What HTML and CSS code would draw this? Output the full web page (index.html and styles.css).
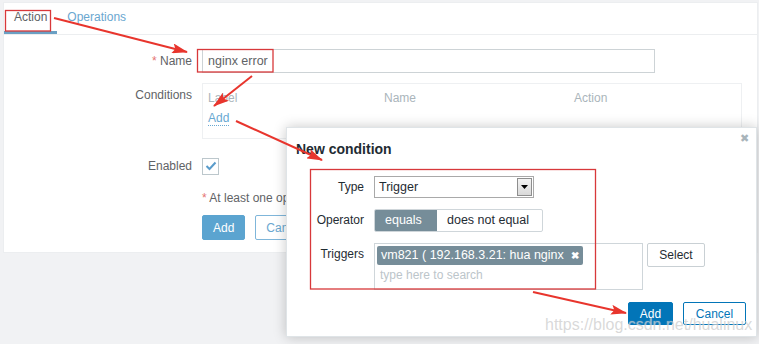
FILE: index.html
```html
<!DOCTYPE html>
<html lang="en">
<head>
  <meta charset="UTF-8">
  <meta name="viewport" content="width=device-width, initial-scale=1.0">
  <title>Action - New condition</title>
  <link rel="stylesheet" href="styles.css">
</head>
<body>
  <div class="page">
    <div class="panel">
      <div class="tabs">
        <div class="tab active">Action</div>
        <div class="tab">Operations</div>
      </div>
      <div class="form">
        <div class="label"><span class="req">*</span> Name</div>
        <div class="field"><div class="input">nginx error</div></div>

        <div class="label">Conditions</div>
        <div class="field">
          <div class="cond-box">
            <div class="cond-head">
              <span class="col-label">Label</span>
              <span class="col-name">Name</span>
              <span class="col-action">Action</span>
            </div>
            <div class="cond-add"><a class="dotted">Add</a></div>
          </div>
        </div>

        <div class="label enabled-label">Enabled</div>
        <div class="field enabled-field">
          <div class="checkbox">
            <svg width="12" height="10" viewBox="0 0 12 10"><path d="M1.5 5 L4.5 8 L10.5 1.5" fill="none" stroke="#5a9ccb" stroke-width="2"/></svg>
          </div>
        </div>

        <div class="label"></div>
        <div class="field note"><span class="req">*</span> At least one operation must exist.</div>

        <div class="label"></div>
        <div class="field buttons">
          <button class="btn primary">Add</button>
          <button class="btn outline">Cancel</button>
        </div>
      </div>
    </div>

    <div class="modal">
      <div class="modal-head">
        <div class="modal-title">New condition</div>
        <div class="modal-close">&#10006;</div>
      </div>
      <div class="modal-body">
        <div class="m-label">Type</div>
        <div class="m-field">
          <div class="select">
            <span>Trigger</span>
            <span class="select-btn">
              <svg width="7" height="4" viewBox="0 0 7 4"><path d="M0 0 H7 L3.5 4 Z" fill="#000"/></svg>
            </span>
          </div>
        </div>

        <div class="m-label">Operator</div>
        <div class="m-field">
          <div class="segment">
            <span class="seg on">equals</span>
            <span class="seg">does not equal</span>
          </div>
        </div>

        <div class="m-label">Triggers</div>
        <div class="m-field triggers">
          <div class="multi">
            <span class="chip">vm821 ( 192.168.3.21: hua nginx <b class="chip-x">&#10006;</b></span>
            <span class="placeholder">type here to search</span>
          </div>
          <button class="btn plain">Select</button>
        </div>
      </div>
      <div class="modal-foot">
        <button class="btn blue">Add</button>
        <button class="btn blue-outline">Cancel</button>
      </div>
    </div>

    <div class="watermark">https://blog.csdn.net/hualinux</div>

    <svg class="marks" width="759" height="344" viewBox="0 0 759 344">
      <defs>
        <marker id="head" viewBox="0 0 16 10" refX="15" refY="5" markerWidth="16" markerHeight="10" markerUnits="userSpaceOnUse" orient="auto">
          <path d="M0 0 L16 5 L0 10 L3 5 Z" fill="#e8352d"/>
        </marker>
      </defs>
      <rect x="5.5" y="10.5" width="45" height="20.5" fill="none" stroke="#d8383a" stroke-width="1.3"/>
      <rect x="197.5" y="49.5" width="75.5" height="22.5" fill="none" stroke="#d8383a" stroke-width="1.3"/>
      <rect x="310.5" y="169.5" width="285" height="119.5" fill="none" stroke="#d8383a" stroke-width="1.3"/>
      <g stroke="#e8352d" stroke-width="2" fill="none" marker-end="url(#head)">
        <line x1="54" y1="18" x2="187" y2="52"/>
        <line x1="252" y1="76" x2="214" y2="106"/>
        <line x1="236" y1="121" x2="322" y2="160"/>
        <line x1="533" y1="292" x2="626" y2="313"/>
      </g>
    </svg>
  </div>
</body>
</html>
```

FILE: styles.css
```css
body {
  margin: 0;
  background-color: #f1f2f4;
  font-family: "Liberation Sans", Arial, sans-serif;
  font-size: 12px;
}
.page {
  position: relative;
  width: 759px;
  height: 344px;
  overflow: hidden;
}
.panel {
  margin: 2px 1px 0 3px;
  height: 249px;
  background-color: #fff;
  border: 1px solid #eceef0;
}
.tabs {
  display: flex;
  border-bottom: 1px solid #eceef0;
}
.tab {
  padding: 0 10px 0 10px;
  line-height: 28px;
  border-bottom: 3px solid transparent;
  color: #6aa7d0;
}
.tab.active {
  color: #5f6366;
  border-bottom-color: #6aa0c4;
}
.form {
  display: grid;
  grid-template-columns: 188px 1fr;
  column-gap: 10px;
  row-gap: 10px;
  padding-top: 14px;
}
.label {
  text-align: right;
  line-height: 24px;
  color: #5f6366;
}
.req {
  color: #e57373;
}
.field {
  color: #5f6366;
}
.input {
  width: 446px;
  height: 22px;
  line-height: 22px;
  padding-left: 5px;
  border: 1px solid #cdd3d6;
  color: #5f6366;
  font-size: 12.5px;
}
.cond-box {
  width: 528px;
  height: 44px;
  padding: 5px;
  border: 1px solid #eef0f2;
  margin-bottom: 5px;
}
.cond-head {
  display: flex;
  line-height: 18px;
  color: #aab5bb;
}
.col-label { width: 176px; }
.col-name { width: 190px; }
.cond-add {
  margin-top: 3px;
  line-height: 16px;
}
.dotted {
  color: #68a8d2;
  border-bottom: 1px dotted #68a8d2;
}
.enabled-field {
  display: flex;
  align-items: center;
}
.checkbox {
  width: 15px;
  height: 15px;
  border: 1px solid #bcc7cc;
  display: flex;
  align-items: center;
  justify-content: center;
}
.note {
  line-height: 20px;
}
.buttons {
  display: flex;
  gap: 10px;
  margin-top: -3px;
}
.btn {
  font-family: "Liberation Sans", Arial, sans-serif;
  font-size: 12px;
  border-radius: 2px;
  cursor: pointer;
  background: #fff;
}
.primary {
  height: 25px;
  padding: 0 10px;
  background-color: #5ba4d0;
  border: 1px solid #5ba4d0;
  color: #fff;
}
.outline {
  height: 25px;
  padding: 0 10px;
  border: 1px solid #7fb6da;
  color: #6aa7d0;
}

/* modal dialog */
.modal {
  position: absolute;
  left: 286px;
  top: 127px;
  width: 469px;
  height: 208px;
  background-color: #fff;
  border: 1px solid #dfe4e7;
  box-shadow: 0 0 12px rgba(0, 0, 0, 0.22);
  display: flex;
  flex-direction: column;
  color: #1f2c33;
}
.modal-head {
  position: relative;
  padding: 12px 10px 0 9px;
}
.modal-title {
  font-size: 14px;
  font-weight: bold;
  line-height: 18px;
  color: #1f2c33;
}
.modal-close {
  position: absolute;
  top: 4px;
  right: 7px;
  font-size: 11px;
  color: #a9b4ba;
}
.modal-body {
  flex: 1;
  display: grid;
  grid-template-columns: 67px 1fr;
  column-gap: 10px;
  row-gap: 11px;
  align-content: start;
  padding: 18px 10px 0 10px;
}
.m-label {
  text-align: right;
  line-height: 22px;
}
.select {
  width: 154px;
  height: 20px;
  border: 1px solid #a9a9a9;
  display: flex;
  align-items: center;
  justify-content: space-between;
  padding-left: 4px;
  font-size: 12.5px;
}
.select-btn {
  width: 15px;
  height: 18px;
  margin-right: 1px;
  border: 1px solid #8e8e8e;
  background: linear-gradient(#f4f4f4, #d9d9d9);
  display: flex;
  align-items: center;
  justify-content: center;
  box-sizing: border-box;
}
.segment {
  display: inline-flex;
  height: 21px;
  border: 1px solid #cfd6da;
  border-radius: 2px;
  overflow: hidden;
}
.seg {
  line-height: 21px;
  padding: 0 10px;
  font-size: 12.5px;
}
.seg.on {
  background-color: #768d99;
  color: #fff;
  width: 42px;
}
.seg:not(.on) {
  width: 85px;
}
.triggers {
  display: flex;
  align-items: flex-start;
  gap: 4px;
}
.multi {
  width: 263px;
  height: 41px;
  border: 1px solid #cfd6da;
  padding: 2px;
  display: flex;
  flex-direction: column;
  align-items: flex-start;
}
.chip {
  background-color: #768d99;
  color: #fff;
  line-height: 18px;
  padding: 0 4px;
  border-radius: 2px;
  font-size: 12.5px;
}
.chip-x {
  font-size: 10px;
  margin-left: 4px;
}
.placeholder {
  color: #bcc5ca;
  line-height: 20px;
  padding-left: 3px;
}
.plain {
  height: 24px;
  width: 58px;
  border: 1px solid #c9d0d4;
  color: #1f2c33;
}
.modal-foot {
  display: flex;
  justify-content: flex-end;
  gap: 10px;
  padding: 0 10px 11px 0;
}
.blue {
  height: 23px;
  width: 45px;
  background-color: #0275b8;
  border: 1px solid #0275b8;
  color: #fff;
}
.blue-outline {
  height: 23px;
  width: 63px;
  border: 1px solid #0275b8;
  color: #0275b8;
}
.watermark {
  position: absolute;
  left: 545px;
  top: 316px;
  font-size: 16px;
  color: rgba(185, 185, 185, 0.55);
  text-shadow: 0 0 1px rgba(255, 255, 255, 0.6);
}
.marks {
  position: absolute;
  left: 0;
  top: 0;
  pointer-events: none;
}
```
